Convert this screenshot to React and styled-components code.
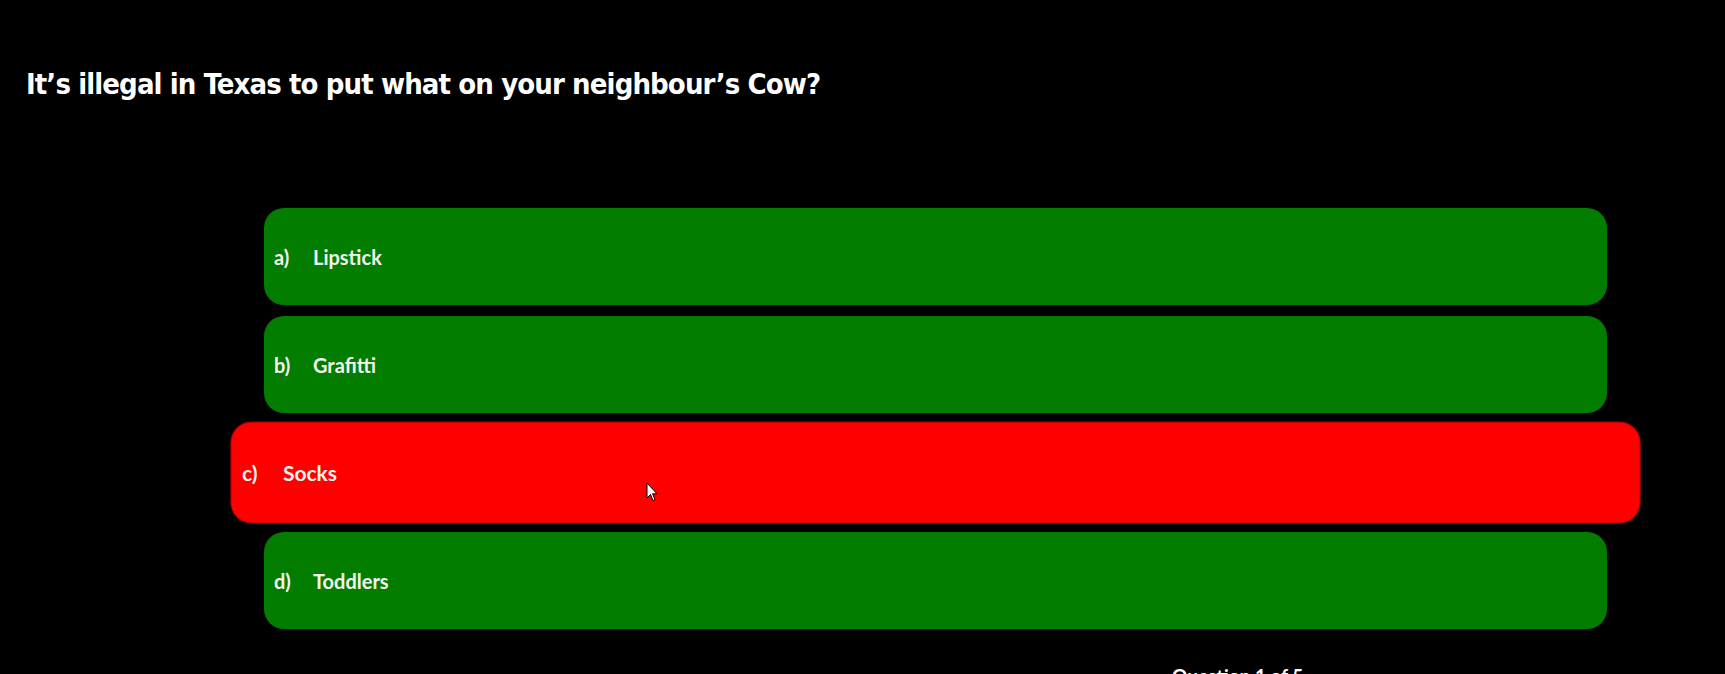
import React from "react";
import styled, { createGlobalStyle } from "styled-components";

const Global = createGlobalStyle`
  html, body { margin: 0; padding: 0; background: #000; }
  body { font-family: Lato, "Open Sans", sans-serif; color: #fff; overflow: hidden; }
`;

const Page = styled.div`
  position: relative;
  width: 1725px;
  height: 674px;
  background: #000;
  overflow: hidden;
`;

const Question = styled.h1`
  margin: 0;
  padding: 64px 0 0 26px;
  height: 146px;
  box-sizing: border-box;
  font-family: "DejaVu Sans Condensed", "DejaVu Sans", Lato, sans-serif;
  font-stretch: condensed;
  font-weight: 700;
  font-size: 29px;
  line-height: 40px;
  letter-spacing: -0.9px;
  color: #fff;
`;

const Options = styled.div`
  display: flex;
  flex-direction: column;
  gap: 11px;
  margin: 62px 118px 0 264px;
`;

const Option = styled.div`
  display: flex;
  align-items: center;
  gap: 21px;
  height: 97px;
  box-sizing: border-box;
  padding: 0 10px;
  border-radius: 20px;
  background: ${p => (p.$selected ? "#fe0000" : "#037d00")};
  border: ${p => (p.$selected ? "1px solid #b30000" : "none")};
  transform: ${p => (p.$selected ? "scale(1.05)" : "none")};
  font-family: Lato, sans-serif;
  font-weight: 700;
  font-size: 20px;
  color: #f4f4ee;
`;

const Letter = styled.span`
  width: 18px;
`;

const Footer = styled.div`
  margin-top: 35px;
  padding-left: 1172px;
  font-family: Lato, sans-serif;
  font-weight: 700;
  font-size: 19px;
  color: #fff;
`;

const Cursor = styled.svg`
  position: absolute;
  left: 646px;
  top: 482px;
`;

const options = [
  { l: "a)", t: "Lipstick" },
  { l: "b)", t: "Grafitti" },
  { l: "c)", t: "Socks", sel: true },
  { l: "d)", t: "Toddlers" },
];

export default function App() {
  return (
    <Page>
      <Global />
      <Question>It’s illegal in Texas to put what on your neighbour’s Cow?</Question>
      <Options>
        {options.map(o => (
          <Option key={o.l} $selected={o.sel}>
            <Letter>{o.l}</Letter>
            <span>{o.t}</span>
          </Option>
        ))}
      </Options>
      <Footer>Question 1 of 5</Footer>
      <Cursor width="12" height="20" viewBox="0 0 12 20">
        <path d="M1 1 L1 16 L4.5 12.5 L7 18.5 L9 17.6 L6.6 11.8 L11 11.8 Z" fill="#fff" stroke="#000" strokeWidth="1" />
      </Cursor>
    </Page>
  );
}
